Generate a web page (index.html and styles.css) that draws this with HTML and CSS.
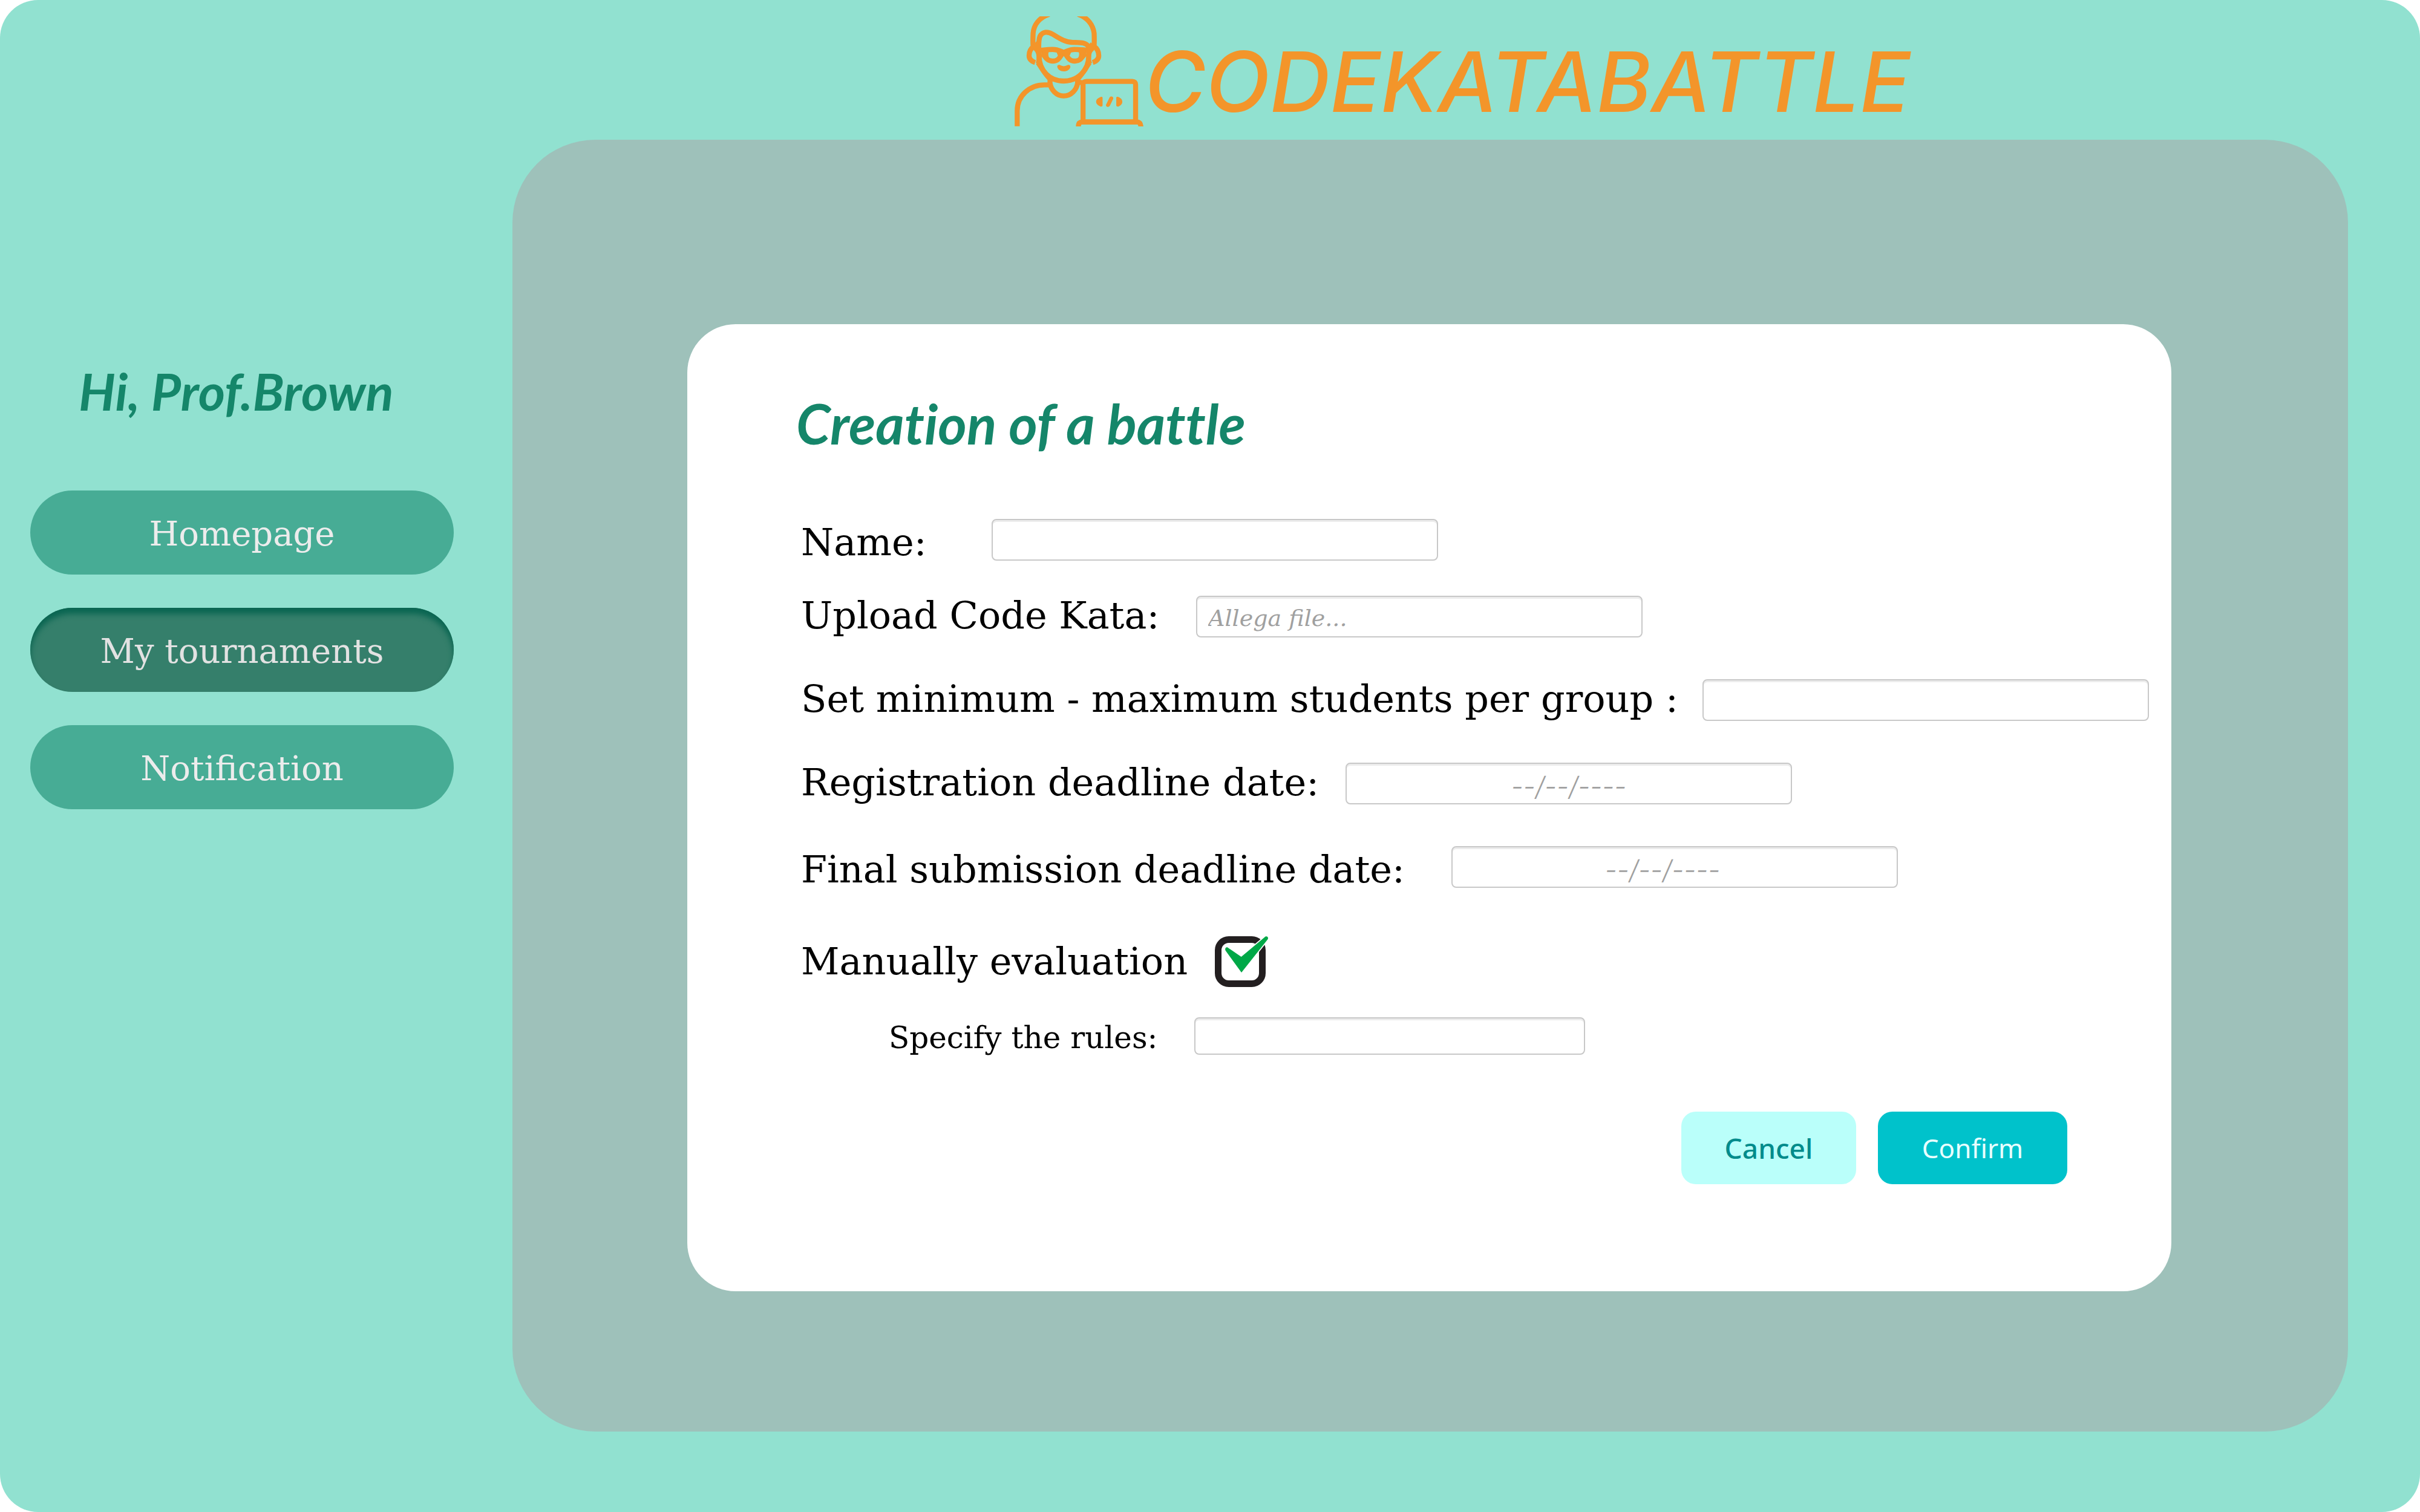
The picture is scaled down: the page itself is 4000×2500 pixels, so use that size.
FILE: index.html
```html
<!DOCTYPE html>
<html lang="en">
<head>
  <meta charset="utf-8">
  <meta name="viewport" content="width=device-width, initial-scale=1">
  <title>CodeKataBattle - Creation of a battle</title>
  <link rel="stylesheet" href="styles.css">
</head>
<body>
  <div class="app">
    <aside class="sidebar">
      <p class="greeting">Hi, Prof.Brown</p>
      <nav class="menu">
        <a class="menu-item" href="#home">Homepage</a>
        <a class="menu-item menu-item-active" href="#tournaments" aria-current="page">My tournaments</a>
        <a class="menu-item" href="#notification">Notification</a>
      </nav>
    </aside>

    <div class="content">
      <header class="brand">
        <svg class="brand-icon" viewBox="110 81 640 546" aria-hidden="true">
          <g fill="none" stroke="#f3952a" stroke-width="25" stroke-linecap="butt" stroke-linejoin="round">
            <path d="M202 228C200 205 201 185 202 165C205 125 230 88 282 70"/>
            <path d="M505 228C506 205 506 185 505 165C500 125 475 88 425 70"/>
            <path d="M230 250C230 225 228 200 236 180C250 155 275 155 300 170C340 195 365 210 400 210C440 211 465 210 478 232V250"/>
            <path d="M206 230C190 240 182 258 182 276C182 294 194 304 212 310"/>
            <path d="M505 230C520 240 528 258 528 276C528 294 516 304 498 310"/>
            <path d="M232 245V278C232 350 285 402 354 402C424 402 478 350 478 278V245"/>
            <path d="M232 250C262 247 275 245 300 245C325 245 338 254 354 259C370 254 385 245 408 245C430 245 448 247 478 250"/>
            <path d="M244 265C262 270 262 303 300 303C338 303 336 266 354 266C372 266 372 303 408 303C446 303 446 270 466 265"/>
            <path d="M226 310C250 345 262 370 286 392V412C290 446 318 476 354 476C390 476 418 446 423 412V392C446 370 458 345 482 310"/>
            <path d="M290 421H258C185 421 123 475 123 550V627"/>
            <path d="M420 405L450 412M450 606V420Q450 404 466 404H695Q711 404 711 420V606M440 605H724"/>
            <path d="M427 640V627Q427 606 445 605H720Q738 606 738 640"/>
          </g>
          <g fill="#f3952a">
            <path d="M196 232L222 200L243 240V320L215 312C222 295 221 262 208 252Z"/>
            <path d="M514 232L488 210L467 240V320L495 312C486 295 487 262 502 252Z"/>
            <path d="M244 244L285 248C274 262 275 280 288 296L262 285ZM466 244L423 248C434 262 433 280 420 296L446 285ZM315 250L354 254L395 250L378 288L354 268L330 288Z"/>
            <path d="M322 330C322 319 334 320 340 325Q354 332 369 325C377 319 388 321 387 332C385 345 370 354 354 354C338 354 323 345 322 330Z"/>
            <path d="M547 486C547 480 541 479 536 482C524 487 515 494 515 505C515 516 524 523 536 528C541 530 547 528 547 522ZM615 486C615 480 621 479 627 482C638 487 645 494 645 505C645 516 638 523 627 528C621 530 615 528 615 522ZM582 483C589 475 602 479 600 490L583 525C576 534 562 531 564 520Z"/>
          </g>
        </svg>
        <span class="brand-name">CODEKATABATTLE</span>
      </header>

      <main class="panel">
        <form class="card">
          <h1 class="title">Creation of a battle</h1>

          <div class="row">
            <label class="label label-name label-low" for="name">Name:</label>
            <input class="field" id="name" type="text">
          </div>
          <div class="row">
            <label class="label label-upload" for="upload">Upload Code Kata:</label>
            <input class="field" id="upload" type="text" placeholder="Allega file...">
          </div>
          <div class="row">
            <label class="label label-group" for="group">Set minimum - maximum students per group :</label>
            <input class="field" id="group" type="text">
          </div>
          <div class="row">
            <label class="label label-registration" for="registration">Registration deadline date:</label>
            <input class="field field-date" id="registration" type="text" placeholder="--/--/----">
          </div>
          <div class="row">
            <label class="label label-submission label-low" for="submission">Final submission deadline date:</label>
            <input class="field field-date field-submission" id="submission" type="text" placeholder="--/--/----">
          </div>
          <div class="row row-check">
            <label class="label label-manual" for="manual">Manually evaluation</label>
            <span class="check">
              <input class="check-box" id="manual" type="checkbox" checked>
              <svg class="check-mark" viewBox="84 54 270 255" aria-hidden="true">
                <path d="M146 109L215 156L334 56C343 51 352 60 346 70L216 234L137 125C132 114 140 107 146 109Z" fill="#00a847" stroke="#fff" stroke-width="10" paint-order="stroke"/>
              </svg>
            </span>
          </div>
          <div class="row row-rules">
            <label class="label label-rules" for="rules">Specify the rules:</label>
            <input class="field field-rules" id="rules" type="text">
          </div>

          <div class="actions">
            <button class="button button-cancel" type="button">Cancel</button>
            <button class="button button-confirm" type="submit">Confirm</button>
          </div>
        </form>
      </main>
    </div>
  </div>
</body>
</html>
```
FILE: styles.css
```css
* {
  box-sizing: border-box;
}

body {
  margin: 0;
  background: #fff;
  font-family: "DejaVu Serif", serif;
}

.app {
  display: flex;
  min-height: 100vh;
  padding-right: 119px;
  border-radius: 63px;
  background: #91e1d0;
}

/* Sidebar */

.sidebar {
  flex: none;
  width: 847px;
  padding: 586px 97px 0 50px;
}

.greeting {
  margin: 0;
  padding-left: 80px;
  color: #15866a;
  font: italic 700 85px/120px Lato, sans-serif;
  font-variant-ligatures: none;
}

.menu {
  display: flex;
  flex-direction: column;
  gap: 55px;
  margin-top: 105px;
}

.menu-item {
  padding: 5px 0 0;
  border-radius: 70px;
  background: #47ac95;
  color: #ececec;
  font-size: 56px;
  line-height: 134px;
  text-align: center;
  text-decoration: none;
}

.menu-item-active {
  background: #357f6b;
  box-shadow: inset 0 10px 10px #0a6652;
  color: #e2e2e2;
}

/* Brand */

.content {
  display: flex;
  flex: 1;
  flex-direction: column;
  padding-bottom: 133px;
}

.brand {
  display: flex;
  gap: 2px;
  align-items: flex-start;
  height: 231px;
  padding: 27px 0 0 830px;
}

.brand-icon {
  width: 213px;
  height: 182px;
}

.brand-name {
  padding-top: 24px;
  color: #f3952a;
  font: italic 500 138px/168px Inter, sans-serif;
}

/* Form */

.panel {
  flex: 1;
  padding: 305px 292px 231px 289px;
  border-radius: 137px;
  background: #9ec1ba;
}

.card {
  padding: 104px 30px 177px 188px;
  border-radius: 80px;
  background: #fff;
}

.title {
  margin: 0 0 98px -8px;
  color: #15866a;
  font: italic 700 91px/120px Lato, sans-serif;
  font-variant-ligatures: none;
}

.row {
  display: flex;
  align-items: center;
  margin-top: 69px;
}

.title + .row {
  margin-top: 0;
}

.title + .row + .row {
  margin-top: 58px;
}

.label {
  flex: none;
  padding-bottom: 4px;
  color: #000;
  font-size: 62px;
  line-height: 60px;
  white-space: nowrap;
}

.label-low {
  padding: 8px 0 0;
}

.label-name {
  width: 315px;
}

.label-upload {
  width: 653px;
}

.label-group {
  width: 1490px;
}

.label-registration {
  width: 900px;
}

.label-submission {
  width: 1075px;
}

.label-manual {
  width: 684px;
  padding-bottom: 0;
}

.label-rules {
  width: 505px;
  padding: 6px 0 0;
  font-size: 50px;
}

.field {
  width: 738px;
  height: 69px;
  padding: 4px 18px 0;
  border: 2px solid #c8c8c8;
  border-radius: 8px;
  background: #fff;
  box-shadow: inset 0 3px 0 #ececec;
  color: #000;
  font: italic 38px/48px "DejaVu Serif", serif;
}

.field::placeholder {
  color: #a0a0a0;
  opacity: 1;
}

.field-date {
  padding-top: 8px;
  font: italic 300 44px/48px Inter, sans-serif;
  text-align: center;
}

.field-submission {
  padding-right: 58px;
}

.field-rules {
  width: 646px;
  height: 62px;
}

.row-check {
  margin-top: 80px;
}

.check {
  position: relative;
  display: flex;
}

.check-box {
  width: 84px;
  height: 84px;
  margin: 0;
  border: 11px solid #231f20;
  border-radius: 23px;
  appearance: none;
  background: #fff;
}

.check-mark {
  position: absolute;
  top: 0;
  left: 0;
  width: 90px;
  height: 85px;
  pointer-events: none;
}

.row-rules {
  margin-top: 48px;
  padding-left: 145px;
}

.actions {
  display: flex;
  justify-content: flex-end;
  gap: 36px;
  margin-top: 92px;
  padding-right: 142px;
}

.button {
  height: 120px;
  border: 0;
  border-radius: 24px;
  font: 46px/60px "Noto Sans", sans-serif;
}

.button-cancel {
  width: 289px;
  background: #bafffa;
  color: #008b8b;
  font-weight: 500;
}

.button-confirm {
  width: 313px;
  background: #00c2cb;
  color: #e8ffff;
  font-size: 44px;
}
```
